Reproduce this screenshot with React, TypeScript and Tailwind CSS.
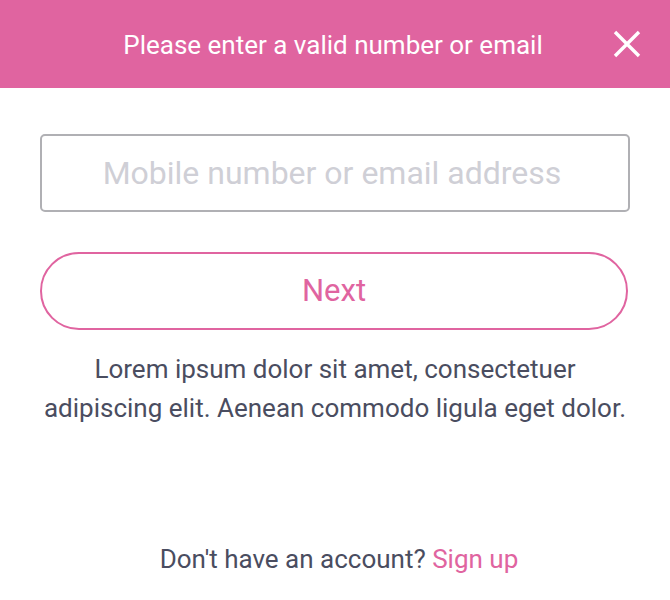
import React from "react";

const App: React.FC = () => {
  return (
    <div className="w-[670px] h-[600px] bg-white flex flex-col font-['Roboto',sans-serif]">
      <div className="h-[88px] bg-[#e064a0] relative flex items-center justify-center">
        <span className="text-white text-[26px] ml-[-4px] mt-[2px]">Please enter a valid number or email</span>
        <button className="absolute right-[28px] top-[29px] w-[30px] h-[30px] flex items-center justify-center">
          <svg width="30" height="30" viewBox="0 0 30 30" fill="none" stroke="white" strokeWidth="3.4">
            <path d="M3 3L27 27M27 3L3 27" />
          </svg>
        </button>
      </div>

      <div className="px-[40px] pt-[46px] flex flex-col">
        <input
          className="w-[590px] h-[78px] border-2 border-[#b0b0b4] rounded-[5px] text-center text-[32px] pr-[6px] text-[#4a4d5f] placeholder:text-[#cfcfd6] outline-none"
          placeholder="Mobile number or email address"
        />
        <button className="mt-[40px] w-[588px] h-[78px] border-2 border-[#e064a0] rounded-full text-[#e064a0] text-[31px]">
          Next
        </button>
        <p className="mt-[20px] text-center text-[26px] leading-[39px] text-[#4a4d60]">
          Lorem ipsum dolor sit amet, consectetuer
          <br />
          adipiscing elit. Aenean commodo ligula eget dolor.
        </p>
      </div>

      <div className="mt-auto pb-[21px] pl-[8px] text-center text-[26px] text-[#4a4d60]">
        Don't have an account? <span className="text-[#e064a0]">Sign up</span>
      </div>
    </div>
  );
};

export default App;
